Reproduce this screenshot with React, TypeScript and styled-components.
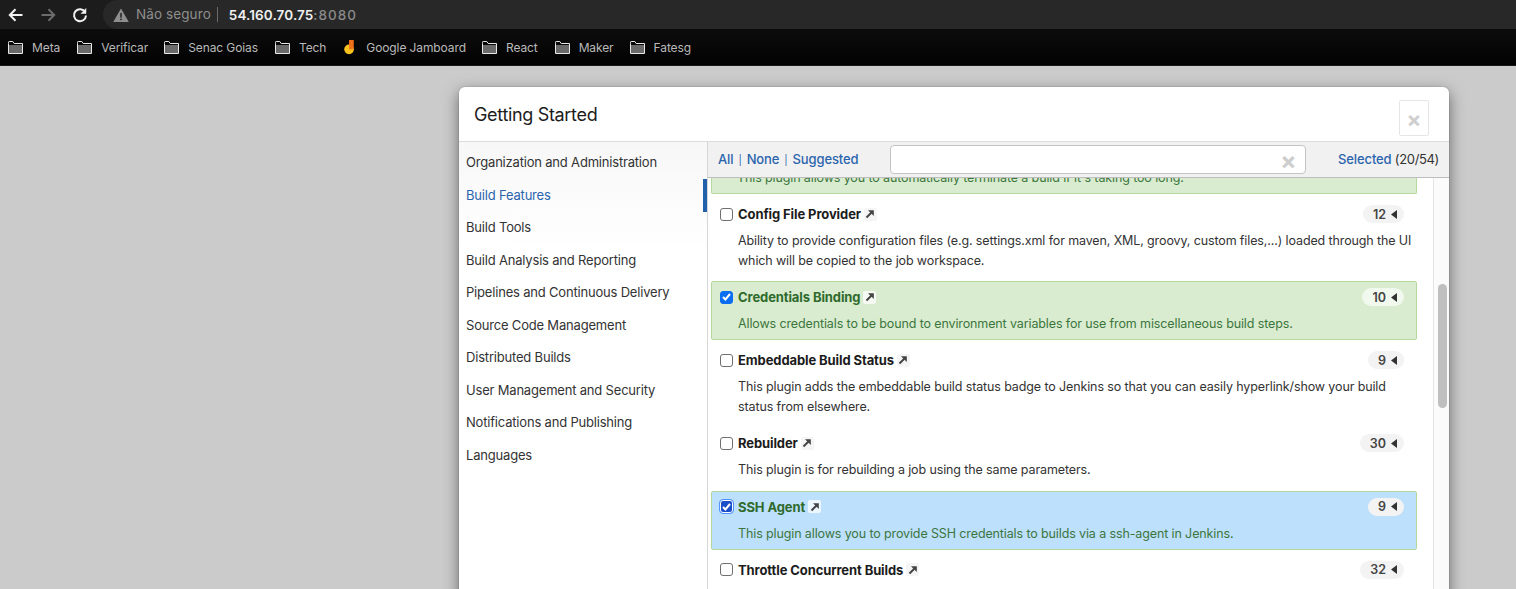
import React from "react";
import styled, { createGlobalStyle } from "styled-components";

const Global = createGlobalStyle`
  html, body { margin: 0; padding: 0; height: 589px; overflow: hidden; background: #cbcbcb; }
  body { font-family: Inter, "Liberation Sans", sans-serif; }
  * { box-sizing: border-box; }
`;

const Page = styled.div`
  width: 1516px;
  height: 589px;
  overflow: hidden;
  display: flex;
  flex-direction: column;
`;
const AddressBar = styled.div`
  height: 29px;
  flex: none;
  background: #1c1c1c;
  display: flex;
  align-items: center;
  padding-left: 7px;
`;
const NavIcon = styled.svg`
  width: 18px;
  height: 18px;
  flex: none;
  margin-right: 14px;
  fill: none;
  stroke: ${p => p.color};
  stroke-width: 2;
`;
const Omnibox = styled.div`
  flex: 1;
  height: 29px;
  background: #282828;
  border-radius: 15px 0 0 15px;
  display: flex;
  align-items: center;
  padding-left: 10px;
  font-size: 13.5px;
  letter-spacing: 0.1px;
`;
const Insecure = styled.span`
  color: #8e8e8e;
  margin-left: 7px;
  padding-right: 6px;
  border-right: 1px solid #6a6a6a;
  line-height: 15px;
`;
const Host = styled.span`
  color: #f0f0f0;
  font-weight: 600;
  margin-left: 11px;
`;
const Port = styled.span`
  color: #8a8a8a;
  letter-spacing: 1px;
  font-weight: 500;
`;
const Bookmarks = styled.div`
  height: 37px;
  flex: none;
  background: linear-gradient(#0c0c0c, #020202);
  border-bottom: 1px solid #1a1a1a;
  display: flex;
  align-items: center;
  padding-left: 8px;
`;
const Bookmark = styled.div<{ $gap: number }>`
  display: flex;
  align-items: center;
  gap: 9px;
  margin-right: ${p => p.$gap}px;
  color: #b9b9b9;
  font-size: 12px;
  letter-spacing: -0.1px;
  white-space: nowrap;
`;
const Stage = styled.div`
  flex: 1;
  min-height: 0;
  padding: 21px 67px 0 459px;
  background: #cbcbcb;
`;
const Modal = styled.div`
  width: 990px;
  height: 560px;
  background: #fff;
  border-radius: 6px;
  box-shadow: 0 5px 15px rgba(0, 0, 0, 0.5), 0 0 0 1px rgba(0, 0, 0, 0.06);
  overflow: hidden;
  display: flex;
  flex-direction: column;
`;
const Header = styled.div`
  height: 55px;
  flex: none;
  border-bottom: 1px solid #dcdcdc;
  display: flex;
  justify-content: space-between;
  padding: 13px 20px 0 15px;
`;
const Title = styled.h1`
  margin: 3px 0 0;
  font-size: 18px;
  font-weight: 400;
  letter-spacing: -0.33px;
  line-height: 24px;
  color: #1c1c1c;
`;
const CloseButton = styled.div`
  width: 30px;
  height: 36px;
  border: 1px solid #e6e6e6;
  border-radius: 2px;
  color: #cfcfcf;
  font-size: 22px;
  font-weight: 700;
  line-height: 36px;
  text-align: center;
`;
const Body = styled.div`
  flex: 1;
  min-height: 0;
  display: flex;
`;
const Sidebar = styled.nav`
  width: 248px;
  flex: none;
  background: linear-gradient(#f7f7f7, #ffffff 110px);
  padding-top: 4px;
`;
const SideItem = styled.div<{ $active?: boolean }>`
  position: relative;
  height: 32.5px;
  padding-left: 7px;
  display: flex;
  align-items: center;
  font-size: 13px;
  letter-spacing: -0.19px;
  color: ${p => (p.$active ? "#2b64ad" : "#333")};
  ${p =>
    p.$active &&
    `&::after { content: ""; position: absolute; right: 0; top: 0; width: 4px; height: 33px; background: #2360ab; }`}
`;
const Main = styled.div`
  flex: 1;
  min-width: 0;
  border-left: 1px solid #d6d6d6;
  display: flex;
  flex-direction: column;
`;
const Toolbar = styled.div`
  height: 36px;
  flex: none;
  background: #f1f1f1;
  border-bottom: 1px solid #bdbdbd;
  display: flex;
  align-items: center;
  padding: 0 10px 2px;
  font-size: 13px;
  font-weight: 500;
  letter-spacing: -0.12px;
  color: #2b64ad;
`;
const Sep = styled.span`
  font-size: 10px;
  font-weight: 400;
  margin: 2px 5px 0;
`;
const Search = styled.div`
  width: 416px;
  height: 29px;
  margin: 2px 0 0 32px;
  background: #fff;
  border: 1px solid #c4c4c4;
  border-radius: 4px;
  display: flex;
  align-items: center;
  justify-content: flex-end;
  padding: 2px 9px 0 0;
  color: #cdcdcd;
  font-size: 24px;
  font-weight: 700;
`;
const Selected = styled.div`
  margin-left: auto;
  white-space: nowrap;
`;
const Count = styled.span`
  color: #333;
  font-weight: 400;
  letter-spacing: -0.35px;
`;
const ScrollArea = styled.div`
  flex: 1;
  min-height: 0;
  display: flex;
`;
const List = styled.div`
  flex: 1;
  min-width: 0;
  padding: 0 16px 0 3px;
  display: flex;
  flex-direction: column;
  gap: 4px;
  overflow: hidden;
`;
const Track = styled.div`
  width: 16px;
  flex: none;
  background: #fbfbfb;
  border-left: 1px solid #e4e4e4;
  padding: 106px 2px 0 4px;
`;
const Thumb = styled.div`
  height: 124px;
  border-radius: 5px;
  background: #bfbfbf;
`;
const Plugin = styled.div<{ $state?: "on" | "focus"; $lines: number }>`
  flex: none;
  height: ${p => 39.15 + p.$lines * 20}px;
  padding: 6px 4px 0 8px;
  border: 1px solid ${p => (p.$state ? "#b5d99c" : "transparent")};
  border-radius: 2px;
  background: ${p =>
    p.$state === "on" ? "#d9ecd0" : p.$state === "focus" ? "#bde0fd" : "transparent"};
  color: ${p => (p.$state ? "#3c763d" : "#333")};
`;
const PluginTop = styled.div`
  height: 16px;
  flex: none;
  padding: 0 0 0 25px;
  border: 1px solid #b5d99c;
  border-top: none;
  border-radius: 0 0 2px 2px;
  background: #d9ecd0;
  color: #3c763d;
  font-size: 12.5px;
  letter-spacing: -0.12px;
  overflow: hidden;
  white-space: nowrap;
`;
const ClippedText = styled.div`
  height: 8px;
  overflow: hidden;
  display: flex;
  align-items: flex-end;
  line-height: 16px;
`;
const TitleRow = styled.div`
  height: 18px;
  display: flex;
  align-items: center;
`;
const Check = styled.span<{ $on?: boolean; $focus?: boolean }>`
  width: 13px;
  height: 13px;
  flex: none;
  margin-right: 5px;
  border-radius: 3px;
  background: ${p => (p.$on ? "#0b6ef0" : "#fff")};
  border: 1px solid ${p => (p.$on ? "#0b6ef0" : "#6f6f6f")};
  ${p => p.$focus && "outline: 1px solid #4d90fe; background: #1b4fc9; border-color: #fff;"}
  display: flex;
  align-items: center;
  justify-content: center;
`;
const Name = styled.span<{ $on?: boolean }>`
  font-size: 13px;
  font-weight: 700;
  letter-spacing: -0.1px;
  color: ${p => (p.$on ? "#2f6a2c" : "#1c1c1c")};
`;
const ExtLink = styled.span<{ $state?: string }>`
  width: 13px;
  height: 13px;
  margin-left: 3px;
  border-radius: 2px;
  background: ${p => (p.$state ? "rgba(255, 255, 255, 0.72)" : "#f5f5f5")};
  display: flex;
  align-items: center;
  justify-content: center;
`;
const Badge = styled.span<{ $on?: boolean }>`
  margin-left: auto;
  margin-right: 8px;
  height: 18px;
  padding: 0 7px 0 10px;
  border-radius: 9px;
  background: ${p => (p.$on ? "rgba(255, 255, 255, 0.62)" : "#f3f3f3")};
  display: flex;
  align-items: center;
  gap: 5px;
  font-size: 12.5px;
  font-weight: 600;
  color: #444;
`;
const Desc = styled.p`
  margin: 8px 0 0 18px;
  font-size: 12.5px;
  letter-spacing: -0.12px;
  line-height: 20px;
`;

const FolderIcon = () => (
  <svg width="15" height="13" viewBox="0 0 15 13">
    <path d="M.5 2.5V1.2C.5.8.8.5 1.2.5h3.6l1.4 2h8.3v10H.5z" fill="none" stroke="#e8e8e8" />
    <rect x="1" y="4" width="13" height="8" fill="#6a6a6a" />
  </svg>
);
const Arrow = () => (
  <svg width="10" height="10" viewBox="0 0 10 10">
    <path d="M1.5 8.5L6.5 3.5" fill="none" stroke="#444" strokeWidth="2" />
    <path d="M3 1.2h5.8V7z" fill="#444" />
  </svg>
);
const Caret = () => (
  <svg width="6" height="9" viewBox="0 0 6 9">
    <path d="M6 0v9L0 4.5z" fill="#333" />
  </svg>
);
const Tick = () => (
  <svg width="9" height="8" viewBox="0 0 9 8">
    <path d="M1 4l2.4 2.5L8 1" fill="none" stroke="#fff" strokeWidth="2" />
  </svg>
);

type P = { name: string; count: number; desc: string; state?: "on" | "focus"; lines: number };
const plugins: P[] = [
  {
    name: "Config File Provider",
    count: 12,
    lines: 2,
    desc: "Ability to provide configuration files (e.g. settings.xml for maven, XML, groovy, custom files,...) loaded through the UI which will be copied to the job workspace.",
  },
  {
    name: "Credentials Binding",
    count: 10,
    lines: 1,
    state: "on",
    desc: "Allows credentials to be bound to environment variables for use from miscellaneous build steps.",
  },
  {
    name: "Embeddable Build Status",
    count: 9,
    lines: 2,
    desc: "This plugin adds the embeddable build status badge to Jenkins so that you can easily hyperlink/show your build status from elsewhere.",
  },
  {
    name: "Rebuilder",
    count: 30,
    lines: 1,
    desc: "This plugin is for rebuilding a job using the same parameters.",
  },
  {
    name: "SSH Agent",
    count: 9,
    lines: 1,
    state: "focus",
    desc: "This plugin allows you to provide SSH credentials to builds via a ssh-agent in Jenkins.",
  },
  {
    name: "Throttle Concurrent Builds",
    count: 32,
    lines: 1,
    desc: "This plugin allows for throttling the number of concurrent builds of a project.",
  },
];

const sections = [
  "Organization and Administration",
  "Build Features",
  "Build Tools",
  "Build Analysis and Reporting",
  "Pipelines and Continuous Delivery",
  "Source Code Management",
  "Distributed Builds",
  "User Management and Security",
  "Notifications and Publishing",
  "Languages",
];

const marks: [string, number][] = [
  ["Meta", 17],
  ["Verificar", 16],
  ["Senac Goias", 17],
  ["Tech", 17],
  ["Google Jamboard", 16],
  ["React", 17],
  ["Maker", 16],
  ["Fatesg", 0],
];

export default function App() {
  return (
    <Page>
      <Global />
      <AddressBar>
        <NavIcon viewBox="0 0 18 18" color="#f2f2f2">
          <path d="M15.5 9H3M8.5 3.2L2.8 9l5.7 5.8" />
        </NavIcon>
        <NavIcon viewBox="0 0 18 18" color="#6c6c6c">
          <path d="M2.5 9H15M9.5 3.2L15.2 9l-5.7 5.8" />
        </NavIcon>
        <NavIcon viewBox="0 0 18 18" color="#f2f2f2">
          <path d="M14.2 6.2A6 6 0 1 0 15 9.5" />
          <path d="M15 2.5v5h-5z" fill="#f2f2f2" strokeWidth="0.5" />
        </NavIcon>
        <Omnibox>
          <svg width="16" height="14" viewBox="0 0 16 14">
            <path d="M8 0.5L15.8 14H.2z" fill="#8e8e8e" />
            <rect x="7.2" y="5" width="1.6" height="4.6" fill="#282828" />
            <rect x="7.2" y="10.6" width="1.6" height="1.6" fill="#282828" />
          </svg>
          <Insecure>Não seguro</Insecure>
          <Host>
            54.160.70.75<Port>:8080</Port>
          </Host>
        </Omnibox>
      </AddressBar>
      <Bookmarks>
        {marks.map(([m, gap]) => (
          <Bookmark key={m} $gap={gap}>
            {m === "Google Jamboard" ? (
              <svg width="14" height="16" viewBox="0 0 15 16">
                <circle cx="6.5" cy="10.5" r="5.2" fill="#f7c31c" />
                <rect x="6.5" y="0.5" width="5" height="10" fill="#f0701a" />
              </svg>
            ) : (
              <FolderIcon />
            )}
            {m}
          </Bookmark>
        ))}
      </Bookmarks>
      <Stage>
        <Modal>
          <Header>
            <Title>Getting Started</Title>
            <CloseButton>×</CloseButton>
          </Header>
          <Body>
            <Sidebar>
              {sections.map((s, i) => (
                <SideItem key={s} $active={i === 1}>
                  {s}
                </SideItem>
              ))}
            </Sidebar>
            <Main>
              <Toolbar>
                All<Sep>|</Sep>None<Sep>|</Sep>Suggested
                <Search>×</Search>
                <Selected>
                  Selected <Count>(20/54)</Count>
                </Selected>
              </Toolbar>
              <ScrollArea>
                <List>
                  <PluginTop>
                    <ClippedText>This plugin allows you to automatically terminate a build if it's taking too long.</ClippedText>
                  </PluginTop>
                  {plugins.map(p => (
                    <Plugin key={p.name} $state={p.state} $lines={p.lines}>
                      <TitleRow>
                        <Check $on={!!p.state} $focus={p.state === "focus"}>
                          {p.state && <Tick />}
                        </Check>
                        <Name $on={!!p.state}>{p.name}</Name>
                        <ExtLink $state={p.state}>
                          <Arrow />
                        </ExtLink>
                        <Badge $on={p.state === "on"}>
                          {p.count}
                          <Caret />
                        </Badge>
                      </TitleRow>
                      <Desc>{p.desc}</Desc>
                    </Plugin>
                  ))}
                </List>
                <Track>
                  <Thumb />
                </Track>
              </ScrollArea>
            </Main>
          </Body>
        </Modal>
      </Stage>
    </Page>
  );
}
